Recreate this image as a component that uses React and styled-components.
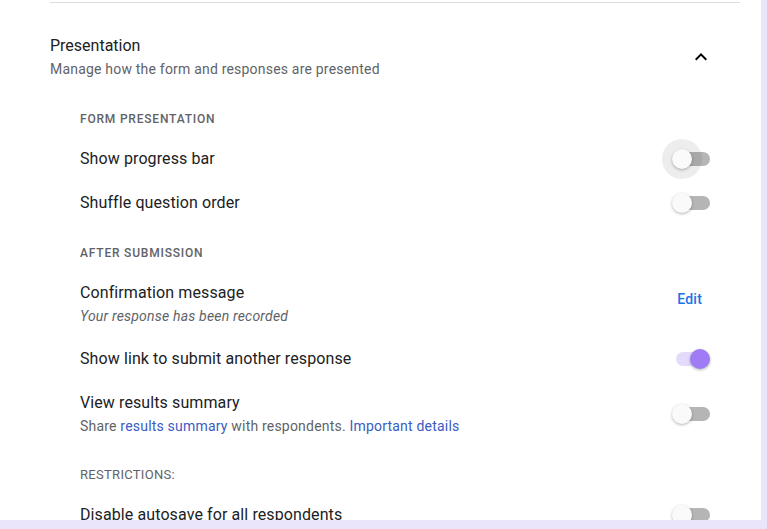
import React from "react";
import styled, { createGlobalStyle } from "styled-components";

const Global = createGlobalStyle`
  html, body { margin: 0; padding: 0; background: #ebe5fc; }
  body { font-family: Roboto, "Liberation Sans", Arial, sans-serif; }
`;

const Panel = styled.div`
  width: 761px;
  height: 520px;
  background: #ffffff;
  overflow: hidden;
  padding: 2px 21px 0 50px;
  box-sizing: border-box;
`;

const Divider = styled.div`
  height: 1px;
  background: #dadce0;
`;

const Header = styled.div`
  display: flex;
  align-items: center;
  justify-content: space-between;
  margin-top: 31px;
  padding-right: 27px;
`;

const HeaderText = styled.div`
  display: flex;
  flex-direction: column;
  gap: 1px;
`;

const Title = styled.div`
  font-size: 16px;
  line-height: 24px;
  color: #202124;
`;

const Subtitle = styled.div`
  font-size: 14px;
  line-height: 20px;
  letter-spacing: 0.2px;
  color: #5f6368;
`;

const ChevronButton = styled.button`
  width: 24px;
  height: 24px;
  padding: 0;
  border: 0;
  background: none;
  display: flex;
  align-items: center;
  justify-content: center;
  color: #000;
`;

const Body = styled.div`
  padding: 0 30px 0 30px;
  margin-top: 32px;
`;

const SectionLabel = styled.div`
  font-size: ${(p) => (p.$plain ? "13px" : "12px")};
  font-weight: ${(p) => (p.$plain ? 400 : 500)};
  letter-spacing: ${(p) => (p.$plain ? "0.3px" : "0.8px")};
  line-height: 16px;
  color: #5f6368;
  text-transform: uppercase;
  margin: ${(p) => (p.$first ? "0" : "20px")} 0 10px;
`;

const Row = styled.div`
  display: flex;
  align-items: center;
  justify-content: space-between;
  padding: 10px 0;
`;

const RowText = styled.div`
  display: flex;
  flex-direction: column;
  gap: 1px;
`;

const Label = styled.div`
  font-size: 16px;
  line-height: 24px;
  letter-spacing: 0.1px;
  color: #202124;
`;

const Hint = styled.div`
  font-size: 14px;
  line-height: 21px;
  letter-spacing: 0.2px;
  color: #5f6368;
  font-style: ${(p) => (p.$italic ? "italic" : "normal")};
`;

const Link = styled.a`
  color: #3b5bc4;
  text-decoration: none;
`;

const TextButton = styled.button`
  align-self: flex-start;
  margin-top: 6px;
  padding: 0 8px;
  border: 0;
  background: none;
  font-family: inherit;
  font-size: 14px;
  font-weight: 500;
  letter-spacing: 0.2px;
  line-height: 24px;
  color: #1a73e8;
`;

const SwitchBox = styled.div`
  position: relative;
  width: 38px;
  height: 20px;
  flex-shrink: 0;
`;

const Track = styled.div`
  position: absolute;
  left: 4px;
  top: 3px;
  width: 34px;
  height: 14px;
  border-radius: 7px;
  background: ${(p) => (p.$on ? "#e4dbfc" : "#b5b5b5")};
`;

const Halo = styled.div`
  position: absolute;
  left: -10px;
  top: -10px;
  width: 40px;
  height: 40px;
  border-radius: 50%;
  background: rgba(0, 0, 0, 0.07);
`;

const Thumb = styled.div`
  position: absolute;
  top: 0;
  left: ${(p) => (p.$on ? "18px" : "0")};
  width: 20px;
  height: 20px;
  border-radius: 50%;
  background: ${(p) => (p.$on ? "#9f7cf6" : "#fafafa")};
  box-shadow: 0 1px 3px rgba(0, 0, 0, 0.3);
`;

const Switch = ({ on, focused }) => (
  <SwitchBox>
    <Track $on={on} />
    {focused && <Halo />}
    <Thumb $on={on} />
  </SwitchBox>
);

export default function App() {
  return (
    <>
      <Global />
      <Panel>
        <Divider />
        <Header>
          <HeaderText>
            <Title>Presentation</Title>
            <Subtitle>Manage how the form and responses are presented</Subtitle>
          </HeaderText>
          <ChevronButton aria-label="Collapse">
            <svg width="24" height="24" viewBox="0 0 24 24" fill="currentColor">
              <path d="M12 8l-6 6 1.41 1.41L12 10.83l4.59 4.58L18 14z" />
            </svg>
          </ChevronButton>
        </Header>
        <Body>
          <SectionLabel $first>Form presentation</SectionLabel>
          <Row>
            <Label>Show progress bar</Label>
            <Switch focused />
          </Row>
          <Row>
            <Label>Shuffle question order</Label>
            <Switch />
          </Row>

          <SectionLabel>After submission</SectionLabel>
          <Row>
            <RowText>
              <Label>Confirmation message</Label>
              <Hint $italic>Your response has been recorded</Hint>
            </RowText>
            <TextButton>Edit</TextButton>
          </Row>
          <Row>
            <Label>Show link to submit another response</Label>
            <Switch on />
          </Row>
          <Row>
            <RowText>
              <Label>View results summary</Label>
              <Hint>
                Share <Link>results summary</Link> with respondents.{" "}
                <Link>Important details</Link>
              </Hint>
            </RowText>
            <Switch />
          </Row>

          <SectionLabel $plain>Restrictions:</SectionLabel>
          <Row>
            <Label>Disable autosave for all respondents</Label>
            <Switch />
          </Row>
        </Body>
      </Panel>
    </>
  );
}
